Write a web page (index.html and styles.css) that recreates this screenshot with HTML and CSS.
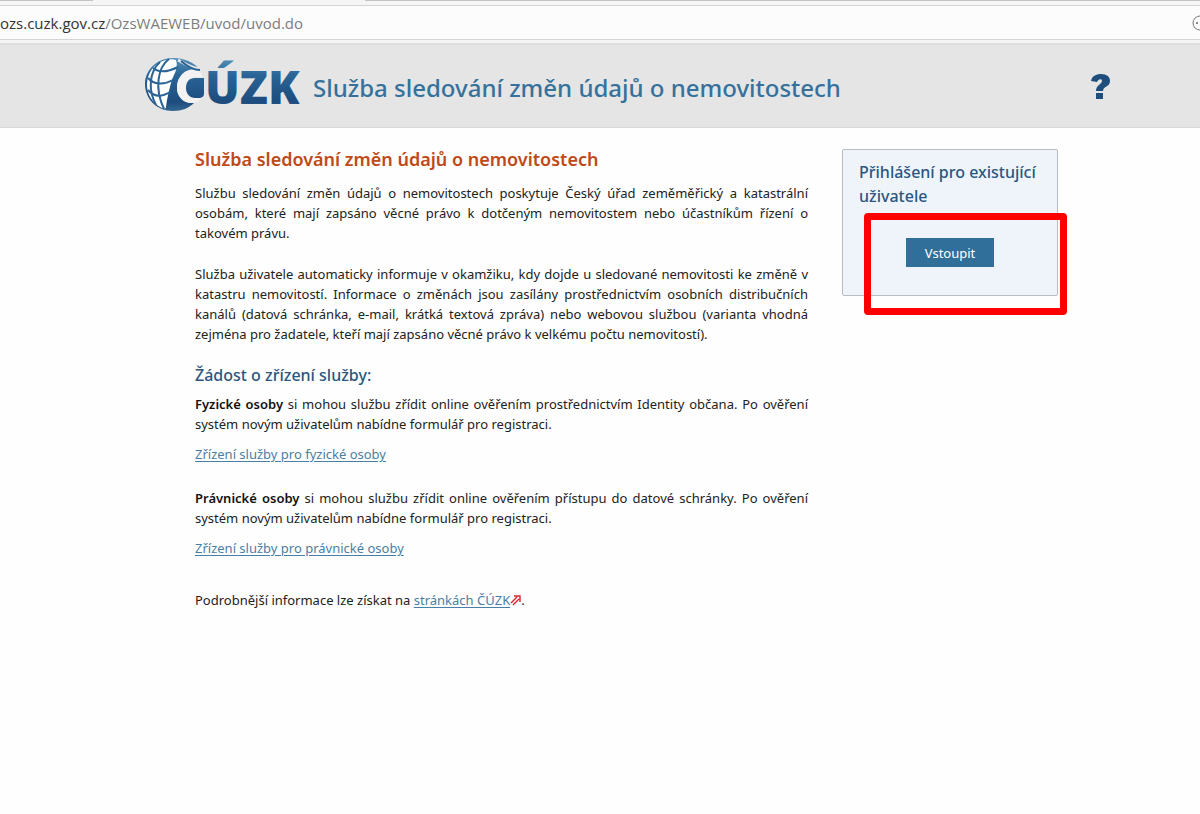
FILE: index.html
```html
<!DOCTYPE html>
<html lang="cs">
<head>
<meta charset="UTF-8">
<meta name="viewport" content="width=device-width, initial-scale=1.0">
<title>Služba sledování změn údajů o nemovitostech</title>
<link rel="stylesheet" href="styles.css">
</head>
<body>

<div class="browser">
  <div class="tabs">
    <span class="tab"></span>
    <span class="tab-active"></span>
    <span class="tab-rest"></span>
  </div>
  <div class="address-bar">
    <span class="url"><span class="url-host">ozs.cuzk.gov.cz</span>/OzsWAEWEB/uvod/uvod.do</span>
    <svg class="address-icon" width="16" height="20" viewBox="0 0 16 20">
      <circle cx="8" cy="10" r="7" fill="none" stroke="#777" stroke-width="1"/>
      <circle cx="5" cy="10" r="1" fill="#666"/>
    </svg>
  </div>
</div>

<header class="header">
  <svg class="logo" width="158" height="60" viewBox="0 0 158 60" role="img" aria-label="ČÚZK">
    <defs>
      <linearGradient id="blue" x1="0" y1="0" x2="0" y2="60" gradientUnits="userSpaceOnUse">
        <stop offset="0.05" stop-color="#5a94ba"/>
        <stop offset="0.35" stop-color="#2a6496"/>
        <stop offset="0.8" stop-color="#1d4c7d"/>
        <stop offset="1" stop-color="#3a7098"/>
      </linearGradient>
    </defs>
    <!-- zeměkoule -->
    <path d="M55 16C49 8 39 4 28 4C12 4 0 16 0 30C0 45 12 57 28 57C37 57 44 54 49 49C39 50 32 43 32 33C32 22 42 15 55 16Z" fill="url(#blue)"/>
    <path d="M31 6C26 4 17 6 11 11C5 16 2 23 2 31C2 40 7 49 17 54C19 55 21 55 21 53C22 44 24 37 26 29C28 21 34 15 31 6Z" fill="#fff"/>
    <g fill="none" stroke="#2a6496" stroke-width="2">
      <path d="M24 5C13 13 9 34 19 55"/>
      <path d="M15 8C4 18 3 36 11 51"/>
      <path d="M8 14C14 19 23 18 33 13"/>
      <path d="M3 24C9 31 19 31 28 26"/>
      <path d="M3 36C9 43 17 43 25 38"/>
    </g>
    <path d="M33 6C40 10 46 14 55 15" fill="none" stroke="#e8e8e8" stroke-width="3"/>
    <!-- písmeno Č -->
    <path d="M54 16C43 13 33 20 32 32C31 42 38 50 49 49C53 48 55 46 56 44H48C43 42 41 38 41 33C41 27 45 24 50 23H58Z" fill="#f2f2f2"/>
    <path d="M59 24H50C44 24 41 28 41 34C41 40 45 44 50 44H55C58 43 59 42 59 40Z" fill="url(#blue)"/>
    <path d="M36 7C43 13 48 16 55 16" fill="none" stroke="#2a6496" stroke-width="2"/>
    <text class="logo-text" x="60" y="50" fill="url(#blue)">ÚZK</text>
  </svg>
  <h1 class="header-title">Služba sledování změn údajů o nemovitostech</h1>
  <a class="help" href="#" aria-label="Nápověda">
    <svg width="20" height="28" viewBox="0 0 20 28">
      <path d="M0 9C1 4 5 2 10 2C16 2 19 5 19 9C19 15 12 14 12 19H5C5 13 11 12 11 9C11 6 7 7 6 10ZM5 21H12V27H5Z" fill="#1f4e7d"/>
    </svg>
  </a>
</header>

<div class="page">
  <main class="content">
    <h2 class="title">Služba sledování změn údajů o nemovitostech</h2>
    <p class="intro">Službu sledování změn údajů o nemovitostech poskytuje Český úřad zeměměřický a katastrální osobám, které mají zapsáno věcné právo k dotčeným nemovitostem nebo účastníkům řízení o takovém právu.</p>
    <p class="intro">Služba uživatele automaticky informuje v okamžiku, kdy dojde u sledované nemovitosti ke změně v katastru nemovitostí. Informace o změnách jsou zasílány prostřednictvím osobních distribučních kanálů (datová schránka, e-mail, krátká textová zpráva) nebo webovou službou (varianta vhodná zejména pro žadatele, kteří mají zapsáno věcné právo k velkému počtu nemovitostí).</p>

    <h3 class="subtitle">Žádost o zřízení služby:</h3>
    <div class="request">
      <p><b>Fyzické osoby</b> si mohou službu zřídit online ověřením prostřednictvím Identity občana. Po ověření systém novým uživatelům nabídne formulář pro registraci.</p>
      <p><a href="#">Zřízení služby pro fyzické osoby</a></p>
    </div>
    <div class="request">
      <p><b>Právnické osoby</b> si mohou službu zřídit online ověřením přístupu do datové schránky. Po ověření systém novým uživatelům nabídne formulář pro registraci.</p>
      <p><a href="#">Zřízení služby pro právnické osoby</a></p>
    </div>
    <p class="more">Podrobnější informace lze získat na <a href="#">stránkách ČÚZK<svg class="external" width="11" height="11" viewBox="0 0 11 11"><path d="M1 8L7 2M3 10L9 4M4 1H10V7" fill="none" stroke="#e0202a" stroke-width="1.4"/></svg></a>.</p>
  </main>

  <aside class="login">
    <h3 class="login-title">Přihlášení pro existující uživatele</h3>
    <button class="login-button" type="button">Vstoupit</button>
    <div class="highlight"></div>
  </aside>
</div>

</body>
</html>
```

FILE: styles.css
```css
* {
  box-sizing: border-box;
  margin: 0;
  padding: 0;
}

body {
  font-family: "Noto Sans", "Open Sans", sans-serif;
  font-size: 13px;
  line-height: 20px;
  color: #222;
  background-color: #fefefe;
}

a {
  color: #4a7fa5;
  text-underline-offset: 2px;
}

b {
  font-weight: 600;
  color: #111;
}

/* Lišta prohlížeče */
.browser {
  background-color: #f5f5f5;
  border-bottom: 2px solid #dedede;
}

.tabs {
  display: flex;
  height: 5px;
}

.tab {
  width: 93px;
  height: 1px;
  background-color: #c4c4c4;
}

.tab-active {
  width: 272px;
}

.tab-rest {
  flex: 1;
  height: 1px;
  background-color: #c4c4c4;
}

.address-bar {
  display: flex;
  align-items: center;
  justify-content: space-between;
  height: 35px;
  margin-bottom: 3px;
  background-color: #fcfcfc;
  border-top: 1px solid #d4d4d4;
  border-bottom: 1px solid #d4d4d4;
  overflow: hidden;
}

.url {
  font-family: "Open Sans", "Noto Sans", sans-serif;
  font-size: 15px;
  color: #7c7c7c;
}

.url-host {
  color: #333;
}

.address-icon {
  margin-right: -8px;
}

/* Hlavička */
.header {
  display: flex;
  align-items: center;
  height: 83px;
  padding: 4px 89px 4px 145px;
  background-color: #e5e5e5;
  border-bottom: 1px solid #d8d8d8;
}

.logo {
  margin-bottom: 4px;
}

.logo-text {
  font-family: "Open Sans", sans-serif;
  font-size: 46px;
  font-weight: 800;
}

.header-title {
  padding-top: 4px;
  margin-left: 10px;
  font-size: 24px;
  line-height: 32px;
  font-weight: 500;
  color: #36719b;
}

.help {
  display: flex;
  margin-left: auto;
}

/* Obsah */
.page {
  display: flex;
  align-items: flex-start;
  gap: 34px;
  padding: 21px 142px 0 195px;
}

.content {
  flex: 1;
  text-align: justify;
}

.title {
  margin-bottom: 14px;
  font-size: 18px;
  font-weight: 600;
  color: #be4a17;
}

.intro {
  margin-bottom: 21px;
}

.subtitle {
  margin-bottom: 9px;
  font-size: 16px;
  font-weight: 500;
  color: #2b567f;
}

.request {
  margin-bottom: 24px;
}

.request p {
  margin-bottom: 10px;
}

.more {
  padding-top: 8px;
}

.external {
  vertical-align: -1px;
}

/* Přihlášení */
.login {
  position: relative;
  width: 216px;
  padding: 10px 16px 28px;
  background-color: #eff4fb;
  border: 1px solid #b9bcc2;
  border-radius: 2px;
}

.login-title {
  margin-bottom: 30px;
  font-size: 16px;
  line-height: 24px;
  font-weight: 500;
  color: #2b567f;
}

.login-button {
  display: block;
  width: 88px;
  height: 29px;
  margin: 0 auto;
  font-family: inherit;
  font-size: 13px;
  color: #fff;
  background-color: #306f99;
  border: none;
  cursor: pointer;
}

/* Červený rámeček kolem tlačítka */
.highlight {
  position: absolute;
  top: 63px;
  right: -10px;
  bottom: -20px;
  left: 21px;
  border: 7px solid #fe0000;
  border-radius: 4px;
  pointer-events: none;
}
```
